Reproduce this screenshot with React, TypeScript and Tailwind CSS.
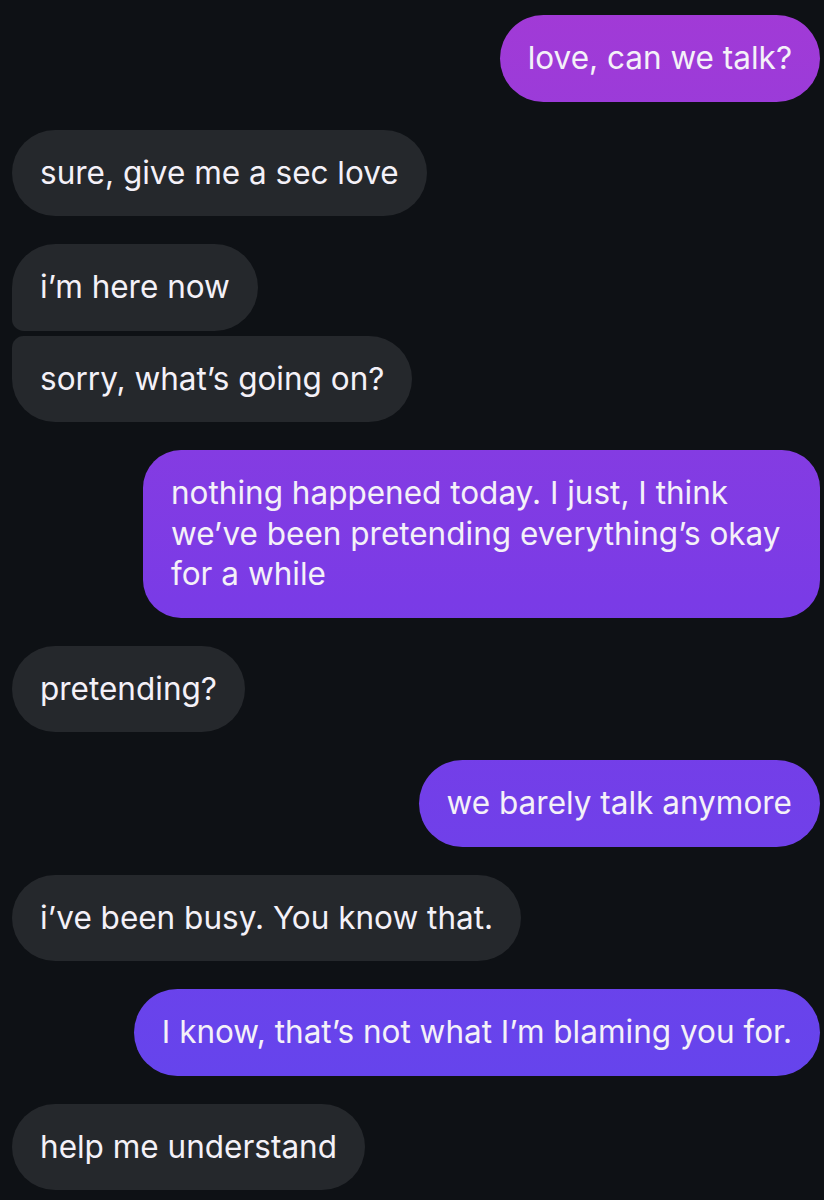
import React from 'react';

type Msg = {
  text: string;
  mine: boolean;
  // grouped bubbles from the same sender sit closer together
  tight?: boolean;
  corner?: string;
  width?: string;
};

const messages: Msg[] = [
  { text: 'love, can we talk?', mine: true },
  { text: 'sure, give me a sec love', mine: false },
  { text: 'i’m here now', mine: false, corner: 'rounded-bl-[12px]' },
  { text: 'sorry, what’s going on?', mine: false, tight: true, corner: 'rounded-tl-[12px]' },
  {
    text: 'nothing happened today. I just, I think we’ve been pretending everything’s okay for a while',
    mine: true,
    width: 'max-w-[677px]',
  },
  { text: 'pretending?', mine: false },
  { text: 'we barely talk anymore', mine: true },
  { text: 'i’ve been busy. You know that.', mine: false },
  { text: 'I know, that’s not what I’m blaming you for.', mine: true },
  { text: 'help me understand', mine: false },
];

function Bubble({ msg }: { msg: Msg }) {
  const multi = msg.text.length > 50;
  return (
    <div className={`flex ${msg.mine ? 'justify-end' : 'justify-start'} ${msg.tight ? 'mt-[5px]' : 'mt-[28px] first:mt-0'}`}>
      <div
        className={`px-[28px] py-[23px] text-[31.5px] leading-[40.5px] text-[#f4f1f8] ${
          multi ? 'rounded-[38px]' : 'rounded-[44px]'
        } ${
          msg.mine
            ? 'bg-fixed bg-linear-to-b from-[#a23ad6] via-[#7a3be6] to-[#6046ee]'
            : 'bg-[#25282c]'
        } ${msg.corner ?? ''} ${msg.width ?? ''}`}
      >
        {msg.text}
      </div>
    </div>
  );
}

export default function App() {
  return (
    <div
      className="min-h-[1200px] bg-[#0e1115] pl-[12px] pr-[4px] pt-[15px] pb-4 flex flex-col"
      style={{ fontFamily: 'Inter, "Noto Sans", sans-serif' }}
    >
      {messages.map((m, i) => (
        <Bubble key={i} msg={m} />
      ))}
    </div>
  );
}
